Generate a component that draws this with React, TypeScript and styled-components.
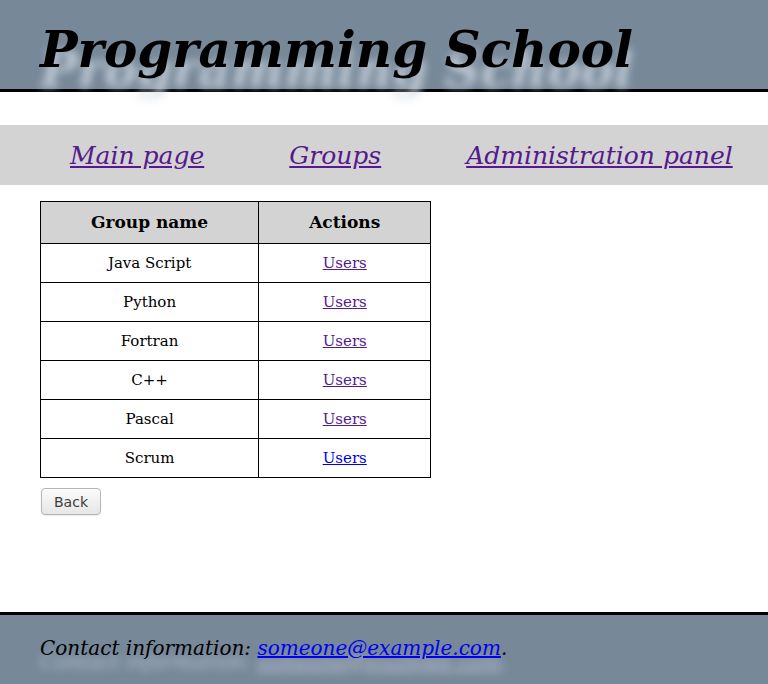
import React from "react";
import styled, { createGlobalStyle } from "styled-components";

const GlobalStyle = createGlobalStyle`
  html, body {
    margin: 0;
    padding: 0;
    background: #fff;
  }
  body {
    font-family: "DejaVu Serif", serif;
    font-size: 16px;
  }
`;

const groups = [
  { name: "Java Script", visited: true },
  { name: "Python", visited: true },
  { name: "Fortran", visited: true },
  { name: "C++", visited: true },
  { name: "Pascal", visited: true },
  { name: "Scrum", visited: false },
];

const Page = styled.div`
  min-height: 100vh;
  display: flex;
  flex-direction: column;
`;

const Header = styled.header`
  background: #778899;
  border-bottom: 3px solid #000;
  height: 89px;
  padding: 0 40px;
  display: flex;
  align-items: flex-start;
`;

const Title = styled.h1`
  margin: 19px 0 0;
  font-family: "DejaVu Serif", serif;
  font-style: italic;
  font-weight: bold;
  font-size: 50px;
  line-height: 62px;
  color: #000;
  text-shadow: 0 20px 9px rgba(205, 213, 222, 0.85);
`;

const Nav = styled.nav`
  margin-top: 33px;
  background: #d3d3d3;
  height: 60px;
  display: flex;
  align-items: center;
  padding: 0 0 0 70px;
  box-sizing: border-box;
  gap: 85px;
`;

const NavLink = styled.a`
  font-style: italic;
  font-size: 25px;
  color: #551a8b;
  text-decoration: underline;
`;

const Main = styled.main`
  flex: 1;
  padding: 16px 40px 0;
`;

const Table = styled.table`
  border-collapse: collapse;
`;

const Th = styled.th`
  background: #d3d3d3;
  border: 1px solid #000;
  padding: 10px 50px;
  font-size: 17px;
  line-height: 21px;
  font-weight: bold;
`;

const Td = styled.td`
  border: 1px solid #000;
  padding: 10px 50px;
  text-align: center;
  font-size: 15px;
  line-height: 18px;
`;

const UserLink = styled.a<{ $visited: boolean }>`
  color: ${(p) => (p.$visited ? "#551a8b" : "#0000ee")};
  text-decoration: underline;
`;

const BackButton = styled.button`
  display: block;
  margin: 10px 0 0 1px;
  width: 60px;
  height: 27px;
  font-family: "DejaVu Sans", sans-serif;
  font-size: 14px;
  color: #3c3c3c;
  border: 1px solid #b5b5b5;
  border-radius: 4px;
  background: linear-gradient(#fbfbfb, #e6e6e6);
  box-shadow: 0 1px 1px rgba(0, 0, 0, 0.08);
`;

const Footer = styled.footer`
  background: #778899;
  border-top: 3px solid #000;
  height: 69px;
  padding: 0 40px;
  display: flex;
  align-items: flex-start;
`;

const Contact = styled.p`
  margin: 21px 0 0;
  font-style: italic;
  font-size: 20px;
  color: #000;
  text-shadow: 0 14px 8px rgba(200, 210, 222, 0.8);
`;

const Mail = styled.a`
  color: #0000ee;
  text-decoration: underline;
`;

export default function App() {
  return (
    <Page>
      <GlobalStyle />
      <Header>
        <Title>Programming School</Title>
      </Header>
      <Nav>
        <NavLink href="#">Main page</NavLink>
        <NavLink href="#">Groups</NavLink>
        <NavLink href="#">Administration panel</NavLink>
      </Nav>
      <Main>
        <Table>
          <thead>
            <tr>
              <Th>Group name</Th>
              <Th>Actions</Th>
            </tr>
          </thead>
          <tbody>
            {groups.map((g) => (
              <tr key={g.name}>
                <Td>{g.name}</Td>
                <Td>
                  <UserLink href="#" $visited={g.visited}>
                    Users
                  </UserLink>
                </Td>
              </tr>
            ))}
          </tbody>
        </Table>
        <BackButton>Back</BackButton>
      </Main>
      <Footer>
        <Contact>
          Contact information: <Mail href="#">someone@example.com</Mail>.
        </Contact>
      </Footer>
    </Page>
  );
}
